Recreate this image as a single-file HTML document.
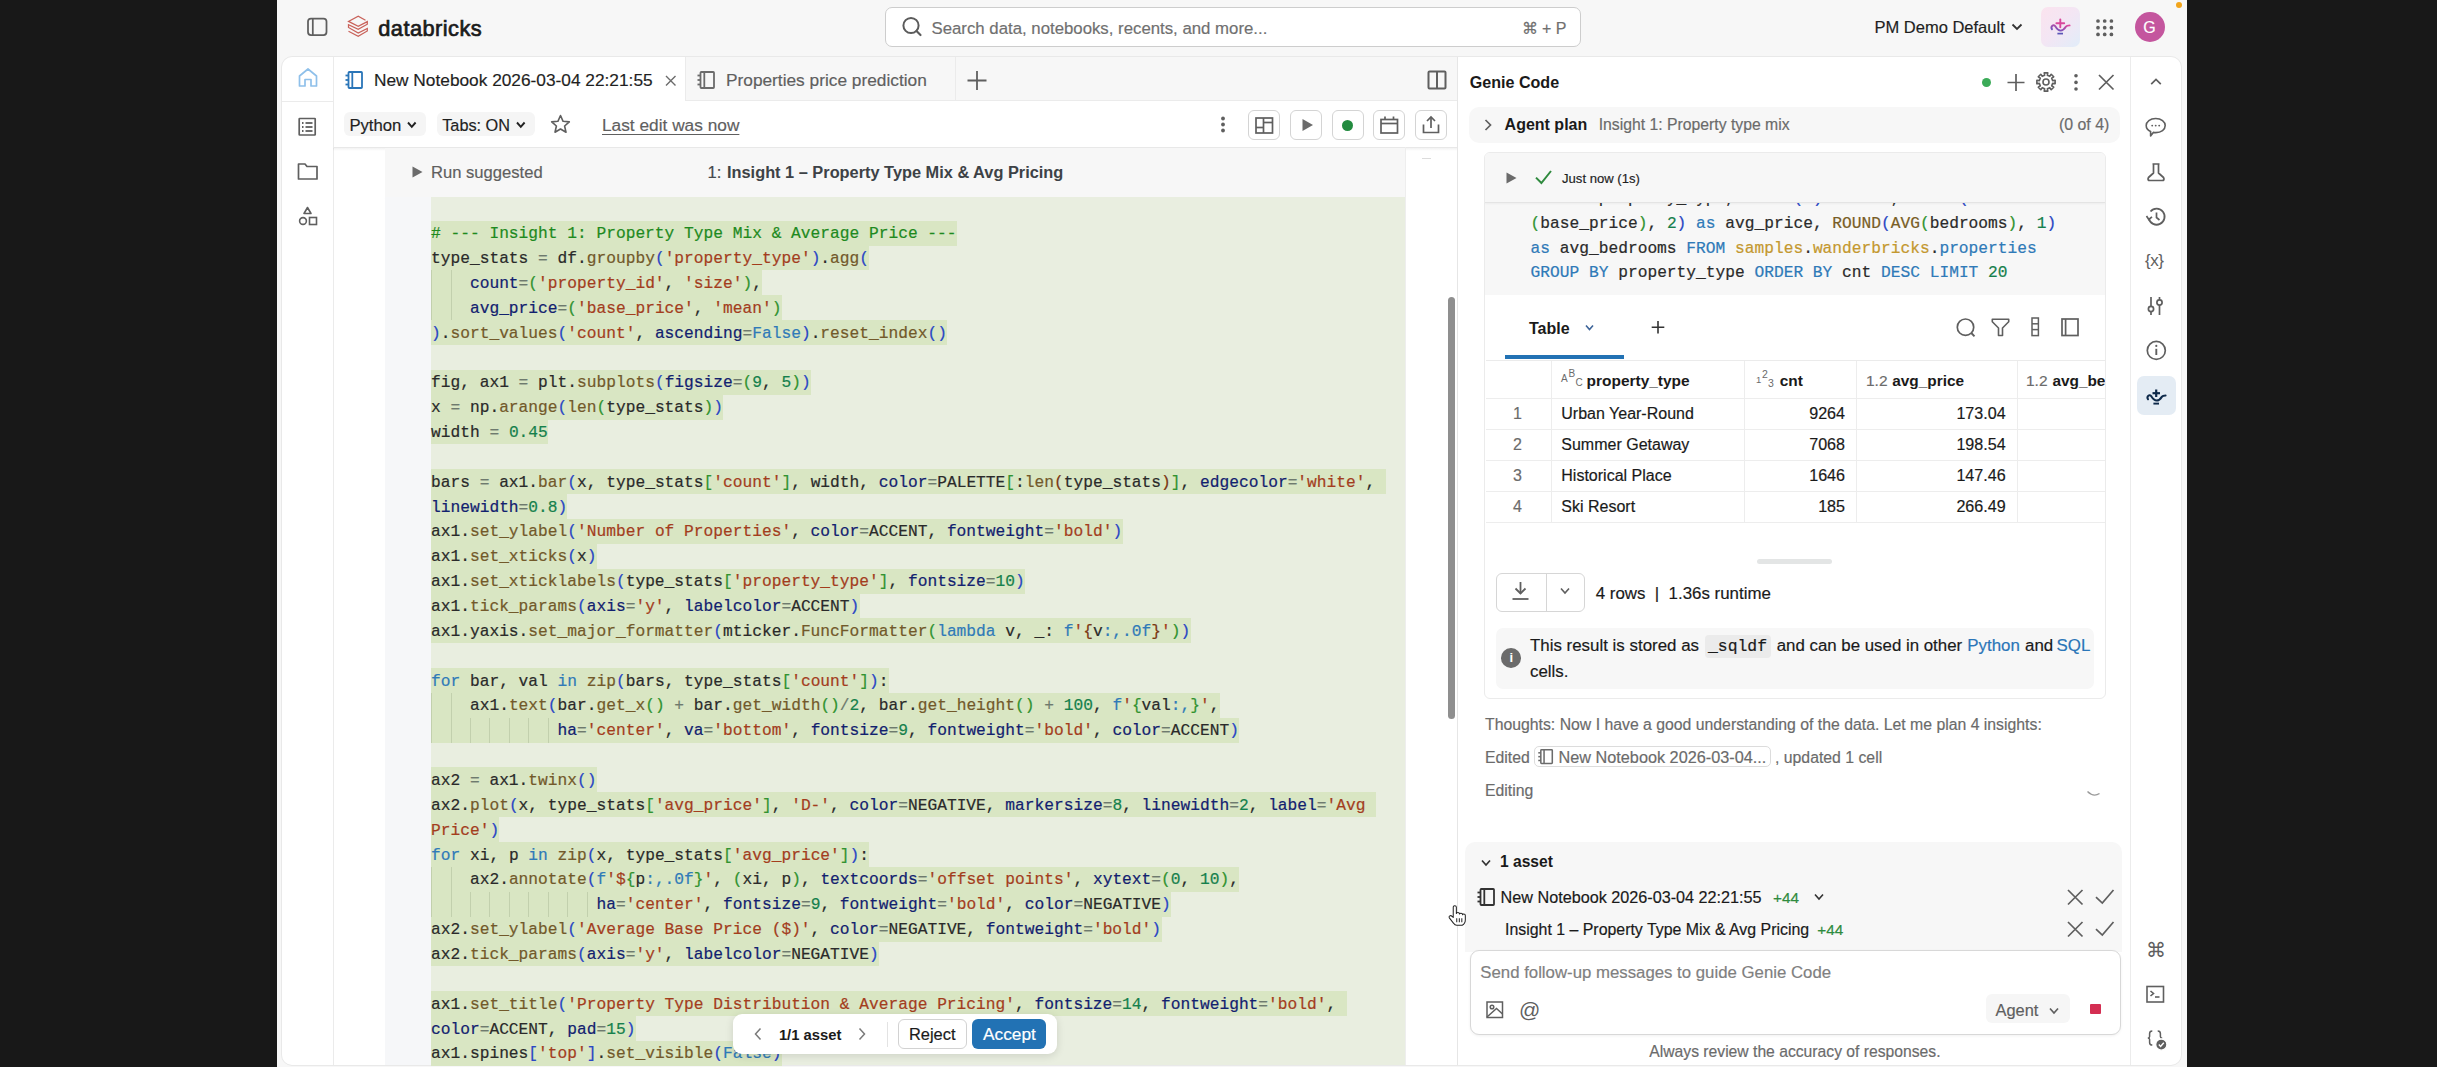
<!DOCTYPE html>
<html><head><meta charset="utf-8">
<style>
*{box-sizing:border-box}
html,body{margin:0;padding:0}
body{width:2437px;height:1067px;background:#181818;position:relative;overflow:hidden;font-family:"Liberation Sans",sans-serif;color:#1f1f1f}
.a{position:absolute}
.t{position:absolute;white-space:pre;line-height:1}
svg{position:absolute;overflow:visible}
.m{font-family:"Liberation Mono",monospace}
</style></head><body>
<div class="a" style="left:277px;top:0px;width:1910px;height:1067px;background:#f7f7f7"></div>
<div class="a" style="left:282px;top:57px;width:1176px;height:1008px;background:#fff;border-radius:10px 0 0 10px;box-shadow:-1px 0 0 0 #e9e9e9,0 -1px 0 0 #e9e9e9,0 1px 0 0 #e9e9e9"></div>
<div class="a" style="left:1458px;top:57px;width:723px;height:1008px;background:#fff;border-radius:0 10px 10px 0;box-shadow:1px 0 0 0 #e9e9e9,0 -1px 0 0 #e9e9e9,0 1px 0 0 #e9e9e9"></div>
<div class="a" style="left:1457px;top:57px;width:1px;height:1008px;background:#e6e6e6"></div>
<svg style="left:300px;top:10px;" width="40" height="40" viewBox="0 0 40 40"><rect x="8" y="8.5" width="18.5" height="16.5" rx="3" fill="none" stroke="#5f5f5f" stroke-width="1.75"/><line x1="12.8" y1="8.5" x2="12.8" y2="25" stroke="#5f5f5f" stroke-width="1.75"/></svg>
<svg style="left:344px;top:12px;" width="30" height="28" viewBox="0 0 30 28"><path d="M21.5 8.3 L14.2 4.2 L4.5 9.4 L14.2 14.4 L23.3 9.6 L23.3 12.2 L14.2 17.3 L4.5 12.8 L4.5 15.5 L14.2 21 L23.3 16.4 L23.3 19 L14.2 24.4 L4.5 19.3" fill="none" stroke="#c9625a" stroke-width="1.25" stroke-linejoin="miter"/></svg>
<div id="tx1" class="t" style="left:378.30px;top:17.82px;font-size:21.8px;color:#1b1b1b;font-weight:400;letter-spacing:0.45px;-webkit-text-stroke:0.7px #1b1b1b">databricks<i style="display:inline-block;width:0;height:0"></i></div>
<div class="a" style="left:885px;top:7px;width:696px;height:40px;background:#fff;border:1.5px solid #cdcdcd;border-radius:7px"></div>
<svg style="left:895px;top:12px;" width="30" height="30" viewBox="0 0 30 30"><circle cx="16" cy="13.5" r="7.6" fill="none" stroke="#5b5b5b" stroke-width="2"/><line x1="21.5" y1="19" x2="25.5" y2="23" stroke="#5b5b5b" stroke-width="2.2" stroke-linecap="round"/></svg>
<div id="tx2" class="t" style="left:931.50px;top:21.01px;font-size:16.8px;color:#707070;font-weight:400;;-webkit-text-stroke:0.18px currentColor">Search data, notebooks, recents, and more...<i style="display:inline-block;width:0;height:0"></i></div>
<div id="tx3" class="t" style="left:1521.50px;top:20.50px;font-size:16px;color:#707070;font-weight:400;;-webkit-text-stroke:0.18px currentColor">⌘ + P<i style="display:inline-block;width:0;height:0"></i></div>
<div id="tx4" class="t" style="left:1874.50px;top:19.21px;font-size:16.5px;color:#1f1f1f;font-weight:400;;-webkit-text-stroke:0.18px currentColor">PM Demo Default<i style="display:inline-block;width:0;height:0"></i></div>
<svg style="left:2010px;top:22px;" width="14" height="10" viewBox="0 0 14 10"><path d="M2.5 2.5 L7 7 L11.5 2.5" fill="none" stroke="#333" stroke-width="1.8"/></svg>
<div class="a" style="left:2041px;top:7px;width:39px;height:40px;border-radius:7px;background:linear-gradient(135deg,#fbe3ee 0%,#f3e6f4 50%,#e1edf9 100%)"></div>
<svg style="left:2040px;top:6px;" width="42" height="42" viewBox="0 0 42 42"><defs><linearGradient id="lg1" x1="0" y1="1" x2="1" y2="0"><stop offset="0" stop-color="#5d55c0"/><stop offset="1" stop-color="#e2479a"/></linearGradient></defs><path d="M12 23.3 C10.2 20.3 13.6 17.6 15.3 20.3 C16.8 22.8 18.6 24.6 20.6 24.6 C23.2 24.6 25 22.2 26 20.6 C26.6 19.6 27.6 19.4 29.6 19.4" fill="none" stroke="url(#lg1)" stroke-width="1.9" stroke-linecap="round"/><line x1="20.3" y1="13.4" x2="20.3" y2="21.2" stroke="#d8479c" stroke-width="1.9" stroke-linecap="round"/><line x1="16.4" y1="17.3" x2="24.2" y2="17.3" stroke="#d8479c" stroke-width="1.9" stroke-linecap="round"/><line x1="17.4" y1="27.6" x2="23" y2="27.6" stroke="#5a55b8" stroke-width="1.7"/></svg>
<svg style="left:2096.3px;top:18.5px;" width="18" height="18" viewBox="0 0 18 18"><circle cx="2.0" cy="2.0" r="1.85" fill="#5f5f5f"/><circle cx="2.0" cy="8.7" r="1.85" fill="#5f5f5f"/><circle cx="2.0" cy="15.4" r="1.85" fill="#5f5f5f"/><circle cx="8.7" cy="2.0" r="1.85" fill="#5f5f5f"/><circle cx="8.7" cy="8.7" r="1.85" fill="#5f5f5f"/><circle cx="8.7" cy="15.4" r="1.85" fill="#5f5f5f"/><circle cx="15.4" cy="2.0" r="1.85" fill="#5f5f5f"/><circle cx="15.4" cy="8.7" r="1.85" fill="#5f5f5f"/><circle cx="15.4" cy="15.4" r="1.85" fill="#5f5f5f"/></svg>
<div class="a" style="left:2134.5px;top:12px;width:30px;height:30px;border-radius:50%;background:#c4569e"></div>
<div id="tx5" class="t" style="left:1649.50px;width:1000px;text-align:center;top:20.00px;font-size:16px;color:#fff;font-weight:400;;-webkit-text-stroke:0.18px currentColor">G<i style="display:inline-block;width:0;height:0"></i></div>
<div class="a" style="left:2176px;top:2px;width:6px;height:6px;border-radius:50%;background:#f2a51c"></div>
<div class="a" style="left:333px;top:57px;width:1px;height:1008px;background:#ebebeb"></div>
<div class="a" style="left:282px;top:101px;width:51px;height:1px;background:#ebebeb"></div>
<div class="a" style="left:685px;top:57px;width:772px;height:44px;background:#f7f7f7;border-bottom:1px solid #ebebeb;border-left:1px solid #ebebeb"></div>
<div class="a" style="left:955px;top:57px;width:1px;height:44px;background:#ebebeb"></div>
<svg style="left:297px;top:67px;" width="22" height="22" viewBox="0 0 22 22"><path d="M2.5 9 L11 2 L19.5 9 L19.5 19 L14 19 L14 12.5 L8 12.5 L8 19 L2.5 19 Z" fill="none" stroke="#8fc0ea" stroke-width="1.7" stroke-linejoin="round"/></svg>
<svg style="left:344px;top:71px;" width="20" height="20" viewBox="0 0 20 20"><g fill="none" stroke="#2a75b8" stroke-width="1.8"><rect x="4.5" y="1" width="13.5" height="16" rx="0.8"/><line x1="8.3" y1="1" x2="8.3" y2="17"/><line x1="1.5" y1="4.5" x2="4.5" y2="4.5"/><line x1="1.5" y1="9" x2="4.5" y2="9"/><line x1="1.5" y1="13.5" x2="4.5" y2="13.5"/></g></svg>
<div id="tx6" class="t" style="left:374.00px;top:71.90px;font-size:17.3px;color:#1f1f1f;font-weight:400;;-webkit-text-stroke:0.18px currentColor">New Notebook 2026-03-04 22:21:55<i style="display:inline-block;width:0;height:0"></i></div>
<svg style="left:665.5px;top:75.5px;" width="12" height="12" viewBox="0 0 12 12"><path d="M0 0 L9.5 9.5 M9.5 0 L0 9.5" stroke="#6b6b6b" stroke-width="1.4"/></svg>
<svg style="left:696px;top:71px;" width="20" height="20" viewBox="0 0 20 20"><g fill="none" stroke="#6b6b6b" stroke-width="1.8"><rect x="4.5" y="1" width="13.5" height="16" rx="0.8"/><line x1="8.3" y1="1" x2="8.3" y2="17"/><line x1="1.5" y1="4.5" x2="4.5" y2="4.5"/><line x1="1.5" y1="9" x2="4.5" y2="9"/><line x1="1.5" y1="13.5" x2="4.5" y2="13.5"/></g></svg>
<div id="tx7" class="t" style="left:726.00px;top:71.90px;font-size:17.3px;color:#5f5f5f;font-weight:400;;-webkit-text-stroke:0.18px currentColor">Properties price prediction<i style="display:inline-block;width:0;height:0"></i></div>
<svg style="left:966px;top:70px;" width="22" height="22" viewBox="0 0 22 22"><path d="M11 1 V20 M1.5 10.5 H20.5" stroke="#5f5f5f" stroke-width="1.8"/></svg>
<svg style="left:1427px;top:70px;" width="22" height="22" viewBox="0 0 22 22"><rect x="1.5" y="1.5" width="17" height="17" rx="1" fill="none" stroke="#5f5f5f" stroke-width="2"/><line x1="10" y1="1.5" x2="10" y2="18.5" stroke="#5f5f5f" stroke-width="2"/></svg>
<div class="a" style="left:344.2px;top:112.3px;width:82px;height:24.2px;background:#f5f5f5;border-radius:6px"></div>
<div id="tx8" class="t" style="left:349.40px;top:117.60px;font-size:16.7px;color:#1f1f1f;font-weight:400;;-webkit-text-stroke:0.18px currentColor">Python<i style="display:inline-block;width:0;height:0"></i></div>
<svg style="left:407.3px;top:121px;" width="12" height="10" viewBox="0 0 12 10"><path d="M1 1.5 L4.8 5.8 L8.6 1.5" fill="none" stroke="#222" stroke-width="1.9"/></svg>
<div class="a" style="left:436.6px;top:112.3px;width:98px;height:24.2px;background:#f5f5f5;border-radius:6px"></div>
<div id="tx9" class="t" style="left:442.20px;top:116.61px;font-size:16.3px;color:#1f1f1f;font-weight:400;;-webkit-text-stroke:0.18px currentColor">Tabs: ON<i style="display:inline-block;width:0;height:0"></i></div>
<svg style="left:516px;top:121px;" width="12" height="10" viewBox="0 0 12 10"><path d="M1 1.5 L4.8 5.8 L8.6 1.5" fill="none" stroke="#222" stroke-width="1.9"/></svg>
<svg style="left:550px;top:114px;" width="22" height="22" viewBox="0 0 22 22"><path d="M10.5 1.5 L13.1 7.3 L19.3 7.9 L14.6 12 L16 18.2 L10.5 15 L5 18.2 L6.4 12 L1.7 7.9 L7.9 7.3 Z" fill="none" stroke="#5f5f5f" stroke-width="1.6" stroke-linejoin="round"/></svg>
<div id="tx10" class="t" style="left:602.00px;top:117.01px;font-size:17.3px;color:#5f5f5f;font-weight:400;text-decoration:underline;text-underline-offset:3px;text-decoration-thickness:1px;-webkit-text-stroke:0.18px currentColor">Last edit was now<i style="display:inline-block;width:0;height:0"></i></div>
<svg style="left:1217px;top:115px;" width="12" height="20" viewBox="0 0 12 20"><circle cx="6" cy="3.5" r="1.9" fill="#5f5f5f"/><circle cx="6" cy="9.5" r="1.9" fill="#5f5f5f"/><circle cx="6" cy="15.5" r="1.9" fill="#5f5f5f"/></svg>
<div class="a" style="left:1248px;top:110px;width:32px;height:30px;border:1.3px solid #d4d4d4;border-radius:6px;background:#fff"></div>
<div class="a" style="left:1290px;top:110px;width:32px;height:30px;border:1.3px solid #d4d4d4;border-radius:6px;background:#fff"></div>
<div class="a" style="left:1331.5px;top:110px;width:32px;height:30px;border:1.3px solid #d4d4d4;border-radius:6px;background:#fff"></div>
<div class="a" style="left:1373px;top:110px;width:32px;height:30px;border:1.3px solid #d4d4d4;border-radius:6px;background:#fff"></div>
<div class="a" style="left:1415px;top:110px;width:32px;height:30px;border:1.3px solid #d4d4d4;border-radius:6px;background:#fff"></div>
<svg style="left:1255px;top:117px;" width="18" height="16" viewBox="0 0 18 16"><g fill="none" stroke="#5f5f5f" stroke-width="1.7"><rect x="1" y="1" width="16.5" height="15"/><line x1="8.5" y1="1" x2="8.5" y2="16"/><line x1="1" y1="10.5" x2="8.5" y2="10.5"/><line x1="8.5" y1="5.5" x2="17.5" y2="5.5"/></g></svg>
<svg style="left:1301px;top:118px;" width="14" height="14" viewBox="0 0 14 14"><path d="M1.5 1 L12 7 L1.5 13 Z" fill="#6b6b6b"/></svg>
<div class="a" style="left:1341.5px;top:119.5px;width:11px;height:11px;border-radius:50%;background:#228b3f"></div>
<svg style="left:1379.5px;top:116px;" width="18" height="18" viewBox="0 0 18 18"><g fill="none" stroke="#5f5f5f" stroke-width="1.7"><rect x="1" y="3.5" width="16.5" height="13.5"/><line x1="1" y1="7.5" x2="17.5" y2="7.5"/><line x1="5" y1="0.5" x2="5" y2="3.5"/><line x1="13.5" y1="0.5" x2="13.5" y2="3.5"/></g></svg>
<svg style="left:1421.5px;top:116px;" width="18" height="18" viewBox="0 0 18 18"><g fill="none" stroke="#5f5f5f" stroke-width="1.7"><path d="M1.5 8.5 V16.5 H16.5 V8.5"/><line x1="9" y1="1" x2="9" y2="12"/><path d="M5 5 L9 1 L13 5"/></g></svg>
<div class="a" style="left:333px;top:147px;width:1124px;height:1px;background:#e8e8e8"></div>
<div class="a" style="left:333px;top:148px;width:1124px;height:3px;background:linear-gradient(rgba(0,0,0,0.05),rgba(0,0,0,0))"></div>
<svg style="left:298px;top:117px;" width="20" height="20" viewBox="0 0 20 20"><g fill="none" stroke="#5f5f5f" stroke-width="1.7"><rect x="1.2" y="1.5" width="16" height="16.5" rx="0.5"/></g><g stroke="#5f5f5f" stroke-width="1.8"><line x1="4" y1="6" x2="5.5" y2="6"/><line x1="7.5" y1="6" x2="14.5" y2="6"/><line x1="4" y1="10" x2="5.5" y2="10"/><line x1="7.5" y1="10" x2="14.5" y2="10"/><line x1="4" y1="14" x2="5.5" y2="14"/><line x1="7.5" y1="14" x2="14.5" y2="14"/></g></svg>
<svg style="left:297px;top:162px;" width="22" height="20" viewBox="0 0 22 20"><path d="M1.5 2 H8 L10 4.5 H20 V17 H1.5 Z" fill="none" stroke="#5f5f5f" stroke-width="1.7" stroke-linejoin="round"/></svg>
<svg style="left:298px;top:206px;" width="22" height="22" viewBox="0 0 22 22"><g fill="none" stroke="#5f5f5f" stroke-width="1.6"><path d="M9.5 1.5 L13 7.5 H6 Z" stroke-linejoin="round"/><circle cx="5" cy="15" r="3.4"/><rect x="11.5" y="11.5" width="7" height="7"/></g></svg>
<div class="a" style="left:385px;top:148px;width:1020px;height:49px;background:#f7f7f7"></div>
<div class="a" style="left:385px;top:196.5px;width:1020px;height:1px;background:#e6e6e6;box-shadow:0 1px 2px rgba(0,0,0,0.05)"></div>
<svg style="left:412px;top:166px;" width="12" height="12" viewBox="0 0 12 12"><path d="M0.5 0.5 L10.5 6 L0.5 11.5 Z" fill="#6b6b6b"/></svg>
<div id="tx11" class="t" style="left:431.00px;top:165.01px;font-size:16.6px;color:#5f5f5f;font-weight:400;;-webkit-text-stroke:0.18px currentColor">Run suggested<i style="display:inline-block;width:0;height:0"></i></div>
<div id="tx12" class="t" style="left:707.50px;top:165.01px;font-size:16.6px;color:#45494d;font-weight:400;;-webkit-text-stroke:0.18px currentColor">1:<i style="display:inline-block;width:0;height:0"></i></div>
<div id="tx13" class="t" style="left:727.00px;top:164.00px;font-size:16.35px;color:#3d4246;font-weight:700;">Insight 1 – Property Type Mix &amp; Avg Pricing<i style="display:inline-block;width:0;height:0"></i></div>
<div class="a" style="left:385px;top:197px;width:46px;height:868px;background:#f6f7f9"></div>
<div class="a" style="left:1421.5px;top:157.5px;width:9px;height:1.5px;background:#dcdcdc"></div>
<div class="a" style="left:1448px;top:297px;width:6.5px;height:422px;background:#8f8f8f;border-radius:4px"></div>
<div class="a" style="left:1405px;top:147px;width:1px;height:918px;background:#eeeeee"></div>
<div class="a" style="left:431px;top:197px;width:974px;height:868px;background:#e9eee0"></div>
<div class="a" style="left:431px;top:220.50px;width:525.96px;height:25.06px;background:#d9e6c3"></div>
<div class="a" style="left:431px;top:245.36px;width:438.30px;height:25.06px;background:#d9e6c3"></div>
<div class="a" style="left:431px;top:270.22px;width:331.16px;height:25.06px;background:#d9e6c3"></div>
<div class="a" style="left:431px;top:295.08px;width:350.64px;height:25.06px;background:#d9e6c3"></div>
<div class="a" style="left:431px;top:319.94px;width:516.22px;height:25.06px;background:#d9e6c3"></div>
<div class="a" style="left:431px;top:369.66px;width:379.86px;height:25.06px;background:#d9e6c3"></div>
<div class="a" style="left:431px;top:394.52px;width:292.20px;height:25.06px;background:#d9e6c3"></div>
<div class="a" style="left:431px;top:419.38px;width:116.88px;height:25.06px;background:#d9e6c3"></div>
<div class="a" style="left:431px;top:469.10px;width:954.52px;height:25.06px;background:#d9e6c3"></div>
<div class="a" style="left:431px;top:493.96px;width:136.36px;height:25.06px;background:#d9e6c3"></div>
<div class="a" style="left:431px;top:518.82px;width:691.54px;height:25.06px;background:#d9e6c3"></div>
<div class="a" style="left:431px;top:543.68px;width:165.58px;height:25.06px;background:#d9e6c3"></div>
<div class="a" style="left:431px;top:568.54px;width:594.14px;height:25.06px;background:#d9e6c3"></div>
<div class="a" style="left:431px;top:593.40px;width:428.56px;height:25.06px;background:#d9e6c3"></div>
<div class="a" style="left:431px;top:618.26px;width:759.72px;height:25.06px;background:#d9e6c3"></div>
<div class="a" style="left:431px;top:667.98px;width:457.78px;height:25.06px;background:#d9e6c3"></div>
<div class="a" style="left:431px;top:692.84px;width:788.94px;height:25.06px;background:#d9e6c3"></div>
<div class="a" style="left:431px;top:717.70px;width:808.42px;height:25.06px;background:#d9e6c3"></div>
<div class="a" style="left:431px;top:767.42px;width:165.58px;height:25.06px;background:#d9e6c3"></div>
<div class="a" style="left:431px;top:792.28px;width:944.78px;height:25.06px;background:#d9e6c3"></div>
<div class="a" style="left:431px;top:817.14px;width:68.18px;height:25.06px;background:#d9e6c3"></div>
<div class="a" style="left:431px;top:842.00px;width:438.30px;height:25.06px;background:#d9e6c3"></div>
<div class="a" style="left:431px;top:866.86px;width:808.42px;height:25.06px;background:#d9e6c3"></div>
<div class="a" style="left:431px;top:891.72px;width:740.24px;height:25.06px;background:#d9e6c3"></div>
<div class="a" style="left:431px;top:916.58px;width:730.50px;height:25.06px;background:#d9e6c3"></div>
<div class="a" style="left:431px;top:941.44px;width:448.04px;height:25.06px;background:#d9e6c3"></div>
<div class="a" style="left:431px;top:991.16px;width:915.56px;height:25.06px;background:#d9e6c3"></div>
<div class="a" style="left:431px;top:1016.02px;width:204.54px;height:25.06px;background:#d9e6c3"></div>
<div class="a" style="left:431px;top:1040.88px;width:350.64px;height:25.06px;background:#d9e6c3"></div>
<div class="a" style="left:431.0px;top:270.2px;width:1px;height:25.2px;background:rgba(90,110,80,0.18)"></div>
<div class="a" style="left:450.5px;top:270.2px;width:1px;height:25.2px;background:rgba(90,110,80,0.18)"></div>
<div class="a" style="left:431.0px;top:295.1px;width:1px;height:25.2px;background:rgba(90,110,80,0.18)"></div>
<div class="a" style="left:450.5px;top:295.1px;width:1px;height:25.2px;background:rgba(90,110,80,0.18)"></div>
<div class="a" style="left:431.0px;top:692.8px;width:1px;height:25.2px;background:rgba(90,110,80,0.18)"></div>
<div class="a" style="left:450.5px;top:692.8px;width:1px;height:25.2px;background:rgba(90,110,80,0.18)"></div>
<div class="a" style="left:431.0px;top:717.7px;width:1px;height:25.2px;background:rgba(90,110,80,0.18)"></div>
<div class="a" style="left:450.5px;top:717.7px;width:1px;height:25.2px;background:rgba(90,110,80,0.18)"></div>
<div class="a" style="left:470.0px;top:717.7px;width:1px;height:25.2px;background:rgba(90,110,80,0.18)"></div>
<div class="a" style="left:489.4px;top:717.7px;width:1px;height:25.2px;background:rgba(90,110,80,0.18)"></div>
<div class="a" style="left:508.9px;top:717.7px;width:1px;height:25.2px;background:rgba(90,110,80,0.18)"></div>
<div class="a" style="left:528.4px;top:717.7px;width:1px;height:25.2px;background:rgba(90,110,80,0.18)"></div>
<div class="a" style="left:547.9px;top:717.7px;width:1px;height:25.2px;background:rgba(90,110,80,0.18)"></div>
<div class="a" style="left:431.0px;top:866.9px;width:1px;height:25.2px;background:rgba(90,110,80,0.18)"></div>
<div class="a" style="left:450.5px;top:866.9px;width:1px;height:25.2px;background:rgba(90,110,80,0.18)"></div>
<div class="a" style="left:431.0px;top:891.7px;width:1px;height:25.2px;background:rgba(90,110,80,0.18)"></div>
<div class="a" style="left:450.5px;top:891.7px;width:1px;height:25.2px;background:rgba(90,110,80,0.18)"></div>
<div class="a" style="left:470.0px;top:891.7px;width:1px;height:25.2px;background:rgba(90,110,80,0.18)"></div>
<div class="a" style="left:489.4px;top:891.7px;width:1px;height:25.2px;background:rgba(90,110,80,0.18)"></div>
<div class="a" style="left:508.9px;top:891.7px;width:1px;height:25.2px;background:rgba(90,110,80,0.18)"></div>
<div class="a" style="left:528.4px;top:891.7px;width:1px;height:25.2px;background:rgba(90,110,80,0.18)"></div>
<div class="a" style="left:547.9px;top:891.7px;width:1px;height:25.2px;background:rgba(90,110,80,0.18)"></div>
<div class="a" style="left:567.4px;top:891.7px;width:1px;height:25.2px;background:rgba(90,110,80,0.18)"></div>
<div class="a" style="left:586.8px;top:891.7px;width:1px;height:25.2px;background:rgba(90,110,80,0.18)"></div>
<div id="tx14" class="t m" style="left:431.00px;top:222.10px;font-size:16.23px;line-height:24.86px;-webkit-text-stroke:0.2px currentColor"><span style="color:#1e8a1e"># --- Insight 1: Property Type Mix &amp; Average Price ---</span><i style="display:inline-block;width:0;height:0"></i></div>
<div id="tx15" class="t m" style="left:431.00px;top:246.96px;font-size:16.23px;line-height:24.86px;-webkit-text-stroke:0.2px currentColor"><span style="color:#2a2a2a">type_stats</span><span style="color:#2a2a2a"> </span><span style="color:#6e7a6e">=</span><span style="color:#2a2a2a"> </span><span style="color:#2a2a2a">df</span><span style="color:#2a2a2a">.</span><span style="color:#72592a">groupby</span><span style="color:#2a47c4">(</span><span style="color:#a33d1d">'property_type'</span><span style="color:#2a47c4">)</span><span style="color:#2a2a2a">.</span><span style="color:#72592a">agg</span><span style="color:#2a47c4">(</span><i style="display:inline-block;width:0;height:0"></i></div>
<div id="tx16" class="t m" style="left:431.00px;top:271.83px;font-size:16.23px;line-height:24.86px;-webkit-text-stroke:0.2px currentColor"><span style="color:#2a2a2a"> </span><span style="color:#2a2a2a"> </span><span style="color:#2a2a2a"> </span><span style="color:#2a2a2a"> </span><span style="color:#12216f">count</span><span style="color:#6e7a6e">=</span><span style="color:#319331">(</span><span style="color:#a33d1d">'property_id'</span><span style="color:#2a2a2a">,</span><span style="color:#2a2a2a"> </span><span style="color:#a33d1d">'size'</span><span style="color:#319331">)</span><span style="color:#2a2a2a">,</span><i style="display:inline-block;width:0;height:0"></i></div>
<div id="tx17" class="t m" style="left:431.00px;top:296.69px;font-size:16.23px;line-height:24.86px;-webkit-text-stroke:0.2px currentColor"><span style="color:#2a2a2a"> </span><span style="color:#2a2a2a"> </span><span style="color:#2a2a2a"> </span><span style="color:#2a2a2a"> </span><span style="color:#12216f">avg_price</span><span style="color:#6e7a6e">=</span><span style="color:#319331">(</span><span style="color:#a33d1d">'base_price'</span><span style="color:#2a2a2a">,</span><span style="color:#2a2a2a"> </span><span style="color:#a33d1d">'mean'</span><span style="color:#319331">)</span><i style="display:inline-block;width:0;height:0"></i></div>
<div id="tx18" class="t m" style="left:431.00px;top:321.54px;font-size:16.23px;line-height:24.86px;-webkit-text-stroke:0.2px currentColor"><span style="color:#2a47c4">)</span><span style="color:#2a2a2a">.</span><span style="color:#72592a">sort_values</span><span style="color:#2a47c4">(</span><span style="color:#a33d1d">'count'</span><span style="color:#2a2a2a">,</span><span style="color:#2a2a2a"> </span><span style="color:#12216f">ascending</span><span style="color:#6e7a6e">=</span><span style="color:#2f7ab8">False</span><span style="color:#2a47c4">)</span><span style="color:#2a2a2a">.</span><span style="color:#72592a">reset_index</span><span style="color:#2a47c4">(</span><span style="color:#2a47c4">)</span><i style="display:inline-block;width:0;height:0"></i></div>
<div id="tx19" class="t m" style="left:431.00px;top:346.40px;font-size:16.23px;line-height:24.86px;-webkit-text-stroke:0.2px currentColor"><i style="display:inline-block;width:0;height:0"></i></div>
<div id="tx20" class="t m" style="left:431.00px;top:371.27px;font-size:16.23px;line-height:24.86px;-webkit-text-stroke:0.2px currentColor"><span style="color:#2a2a2a">fig</span><span style="color:#2a2a2a">,</span><span style="color:#2a2a2a"> </span><span style="color:#2a2a2a">ax1</span><span style="color:#2a2a2a"> </span><span style="color:#6e7a6e">=</span><span style="color:#2a2a2a"> </span><span style="color:#2a2a2a">plt</span><span style="color:#2a2a2a">.</span><span style="color:#72592a">subplots</span><span style="color:#2a47c4">(</span><span style="color:#12216f">figsize</span><span style="color:#6e7a6e">=</span><span style="color:#319331">(</span><span style="color:#15804c">9</span><span style="color:#2a2a2a">,</span><span style="color:#2a2a2a"> </span><span style="color:#15804c">5</span><span style="color:#319331">)</span><span style="color:#2a47c4">)</span><i style="display:inline-block;width:0;height:0"></i></div>
<div id="tx21" class="t m" style="left:431.00px;top:396.13px;font-size:16.23px;line-height:24.86px;-webkit-text-stroke:0.2px currentColor"><span style="color:#2a2a2a">x</span><span style="color:#2a2a2a"> </span><span style="color:#6e7a6e">=</span><span style="color:#2a2a2a"> </span><span style="color:#2a2a2a">np</span><span style="color:#2a2a2a">.</span><span style="color:#72592a">arange</span><span style="color:#2a47c4">(</span><span style="color:#72592a">len</span><span style="color:#319331">(</span><span style="color:#2a2a2a">type_stats</span><span style="color:#319331">)</span><span style="color:#2a47c4">)</span><i style="display:inline-block;width:0;height:0"></i></div>
<div id="tx22" class="t m" style="left:431.00px;top:420.98px;font-size:16.23px;line-height:24.86px;-webkit-text-stroke:0.2px currentColor"><span style="color:#2a2a2a">width</span><span style="color:#2a2a2a"> </span><span style="color:#6e7a6e">=</span><span style="color:#2a2a2a"> </span><span style="color:#15804c">0.45</span><i style="display:inline-block;width:0;height:0"></i></div>
<div id="tx23" class="t m" style="left:431.00px;top:445.85px;font-size:16.23px;line-height:24.86px;-webkit-text-stroke:0.2px currentColor"><i style="display:inline-block;width:0;height:0"></i></div>
<div id="tx24" class="t m" style="left:431.00px;top:470.71px;font-size:16.23px;line-height:24.86px;-webkit-text-stroke:0.2px currentColor"><span style="color:#2a2a2a">bars</span><span style="color:#2a2a2a"> </span><span style="color:#6e7a6e">=</span><span style="color:#2a2a2a"> </span><span style="color:#2a2a2a">ax1</span><span style="color:#2a2a2a">.</span><span style="color:#72592a">bar</span><span style="color:#2a47c4">(</span><span style="color:#2a2a2a">x</span><span style="color:#2a2a2a">,</span><span style="color:#2a2a2a"> </span><span style="color:#2a2a2a">type_stats</span><span style="color:#319331">[</span><span style="color:#a33d1d">'count'</span><span style="color:#319331">]</span><span style="color:#2a2a2a">,</span><span style="color:#2a2a2a"> </span><span style="color:#2a2a2a">width</span><span style="color:#2a2a2a">,</span><span style="color:#2a2a2a"> </span><span style="color:#12216f">color</span><span style="color:#6e7a6e">=</span><span style="color:#2a2a2a">PALETTE</span><span style="color:#319331">[</span><span style="color:#2a2a2a">:</span><span style="color:#72592a">len</span><span style="color:#7b3814">(</span><span style="color:#2a2a2a">type_stats</span><span style="color:#7b3814">)</span><span style="color:#319331">]</span><span style="color:#2a2a2a">,</span><span style="color:#2a2a2a"> </span><span style="color:#12216f">edgecolor</span><span style="color:#6e7a6e">=</span><span style="color:#a33d1d">'white'</span><span style="color:#2a2a2a">,</span><span style="color:#2a2a2a"> </span><i style="display:inline-block;width:0;height:0"></i></div>
<div id="tx25" class="t m" style="left:431.00px;top:495.56px;font-size:16.23px;line-height:24.86px;-webkit-text-stroke:0.2px currentColor"><span style="color:#12216f">linewidth</span><span style="color:#6e7a6e">=</span><span style="color:#15804c">0.8</span><span style="color:#2a47c4">)</span><i style="display:inline-block;width:0;height:0"></i></div>
<div id="tx26" class="t m" style="left:431.00px;top:520.42px;font-size:16.23px;line-height:24.86px;-webkit-text-stroke:0.2px currentColor"><span style="color:#2a2a2a">ax1</span><span style="color:#2a2a2a">.</span><span style="color:#72592a">set_ylabel</span><span style="color:#2a47c4">(</span><span style="color:#a33d1d">'Number of Properties'</span><span style="color:#2a2a2a">,</span><span style="color:#2a2a2a"> </span><span style="color:#12216f">color</span><span style="color:#6e7a6e">=</span><span style="color:#2a2a2a">ACCENT</span><span style="color:#2a2a2a">,</span><span style="color:#2a2a2a"> </span><span style="color:#12216f">fontweight</span><span style="color:#6e7a6e">=</span><span style="color:#a33d1d">'bold'</span><span style="color:#2a47c4">)</span><i style="display:inline-block;width:0;height:0"></i></div>
<div id="tx27" class="t m" style="left:431.00px;top:545.29px;font-size:16.23px;line-height:24.86px;-webkit-text-stroke:0.2px currentColor"><span style="color:#2a2a2a">ax1</span><span style="color:#2a2a2a">.</span><span style="color:#72592a">set_xticks</span><span style="color:#2a47c4">(</span><span style="color:#2a2a2a">x</span><span style="color:#2a47c4">)</span><i style="display:inline-block;width:0;height:0"></i></div>
<div id="tx28" class="t m" style="left:431.00px;top:570.15px;font-size:16.23px;line-height:24.86px;-webkit-text-stroke:0.2px currentColor"><span style="color:#2a2a2a">ax1</span><span style="color:#2a2a2a">.</span><span style="color:#72592a">set_xticklabels</span><span style="color:#2a47c4">(</span><span style="color:#2a2a2a">type_stats</span><span style="color:#319331">[</span><span style="color:#a33d1d">'property_type'</span><span style="color:#319331">]</span><span style="color:#2a2a2a">,</span><span style="color:#2a2a2a"> </span><span style="color:#12216f">fontsize</span><span style="color:#6e7a6e">=</span><span style="color:#15804c">10</span><span style="color:#2a47c4">)</span><i style="display:inline-block;width:0;height:0"></i></div>
<div id="tx29" class="t m" style="left:431.00px;top:595.00px;font-size:16.23px;line-height:24.86px;-webkit-text-stroke:0.2px currentColor"><span style="color:#2a2a2a">ax1</span><span style="color:#2a2a2a">.</span><span style="color:#72592a">tick_params</span><span style="color:#2a47c4">(</span><span style="color:#12216f">axis</span><span style="color:#6e7a6e">=</span><span style="color:#a33d1d">'y'</span><span style="color:#2a2a2a">,</span><span style="color:#2a2a2a"> </span><span style="color:#12216f">labelcolor</span><span style="color:#6e7a6e">=</span><span style="color:#2a2a2a">ACCENT</span><span style="color:#2a47c4">)</span><i style="display:inline-block;width:0;height:0"></i></div>
<div id="tx30" class="t m" style="left:431.00px;top:619.87px;font-size:16.23px;line-height:24.86px;-webkit-text-stroke:0.2px currentColor"><span style="color:#2a2a2a">ax1</span><span style="color:#2a2a2a">.</span><span style="color:#2a2a2a">yaxis</span><span style="color:#2a2a2a">.</span><span style="color:#72592a">set_major_formatter</span><span style="color:#2a47c4">(</span><span style="color:#2a2a2a">mticker</span><span style="color:#2a2a2a">.</span><span style="color:#72592a">FuncFormatter</span><span style="color:#319331">(</span><span style="color:#2f7ab8">lambda</span><span style="color:#2a2a2a"> </span><span style="color:#2a2a2a">v</span><span style="color:#2a2a2a">,</span><span style="color:#2a2a2a"> </span><span style="color:#2a2a2a">_</span><span style="color:#2a2a2a">:</span><span style="color:#2a2a2a"> </span><span style="color:#2f7ab8">f</span><span style="color:#a33d1d">'</span><span style="color:#7b3814">{</span><span style="color:#2a2a2a">v</span><span style="color:#2f7ab8">:,.0f</span><span style="color:#7b3814">}</span><span style="color:#a33d1d">'</span><span style="color:#319331">)</span><span style="color:#2a47c4">)</span><i style="display:inline-block;width:0;height:0"></i></div>
<div id="tx31" class="t m" style="left:431.00px;top:644.73px;font-size:16.23px;line-height:24.86px;-webkit-text-stroke:0.2px currentColor"><i style="display:inline-block;width:0;height:0"></i></div>
<div id="tx32" class="t m" style="left:431.00px;top:669.59px;font-size:16.23px;line-height:24.86px;-webkit-text-stroke:0.2px currentColor"><span style="color:#2f7ab8">for</span><span style="color:#2a2a2a"> </span><span style="color:#2a2a2a">bar</span><span style="color:#2a2a2a">,</span><span style="color:#2a2a2a"> </span><span style="color:#2a2a2a">val</span><span style="color:#2a2a2a"> </span><span style="color:#2f7ab8">in</span><span style="color:#2a2a2a"> </span><span style="color:#72592a">zip</span><span style="color:#2a47c4">(</span><span style="color:#2a2a2a">bars</span><span style="color:#2a2a2a">,</span><span style="color:#2a2a2a"> </span><span style="color:#2a2a2a">type_stats</span><span style="color:#319331">[</span><span style="color:#a33d1d">'count'</span><span style="color:#319331">]</span><span style="color:#2a47c4">)</span><span style="color:#2a2a2a">:</span><i style="display:inline-block;width:0;height:0"></i></div>
<div id="tx33" class="t m" style="left:431.00px;top:694.44px;font-size:16.23px;line-height:24.86px;-webkit-text-stroke:0.2px currentColor"><span style="color:#2a2a2a"> </span><span style="color:#2a2a2a"> </span><span style="color:#2a2a2a"> </span><span style="color:#2a2a2a"> </span><span style="color:#2a2a2a">ax1</span><span style="color:#2a2a2a">.</span><span style="color:#72592a">text</span><span style="color:#2a47c4">(</span><span style="color:#2a2a2a">bar</span><span style="color:#2a2a2a">.</span><span style="color:#72592a">get_x</span><span style="color:#319331">(</span><span style="color:#319331">)</span><span style="color:#2a2a2a"> </span><span style="color:#6e7a6e">+</span><span style="color:#2a2a2a"> </span><span style="color:#2a2a2a">bar</span><span style="color:#2a2a2a">.</span><span style="color:#72592a">get_width</span><span style="color:#319331">(</span><span style="color:#319331">)</span><span style="color:#6e7a6e">/</span><span style="color:#15804c">2</span><span style="color:#2a2a2a">,</span><span style="color:#2a2a2a"> </span><span style="color:#2a2a2a">bar</span><span style="color:#2a2a2a">.</span><span style="color:#72592a">get_height</span><span style="color:#319331">(</span><span style="color:#319331">)</span><span style="color:#2a2a2a"> </span><span style="color:#6e7a6e">+</span><span style="color:#2a2a2a"> </span><span style="color:#15804c">100</span><span style="color:#2a2a2a">,</span><span style="color:#2a2a2a"> </span><span style="color:#2f7ab8">f</span><span style="color:#a33d1d">'</span><span style="color:#319331">{</span><span style="color:#2a2a2a">val</span><span style="color:#2f7ab8">:,</span><span style="color:#319331">}</span><span style="color:#a33d1d">'</span><span style="color:#2a2a2a">,</span><i style="display:inline-block;width:0;height:0"></i></div>
<div id="tx34" class="t m" style="left:431.00px;top:719.31px;font-size:16.23px;line-height:24.86px;-webkit-text-stroke:0.2px currentColor"><span style="color:#2a2a2a"> </span><span style="color:#2a2a2a"> </span><span style="color:#2a2a2a"> </span><span style="color:#2a2a2a"> </span><span style="color:#2a2a2a"> </span><span style="color:#2a2a2a"> </span><span style="color:#2a2a2a"> </span><span style="color:#2a2a2a"> </span><span style="color:#2a2a2a"> </span><span style="color:#2a2a2a"> </span><span style="color:#2a2a2a"> </span><span style="color:#2a2a2a"> </span><span style="color:#2a2a2a"> </span><span style="color:#12216f">ha</span><span style="color:#6e7a6e">=</span><span style="color:#a33d1d">'center'</span><span style="color:#2a2a2a">,</span><span style="color:#2a2a2a"> </span><span style="color:#12216f">va</span><span style="color:#6e7a6e">=</span><span style="color:#a33d1d">'bottom'</span><span style="color:#2a2a2a">,</span><span style="color:#2a2a2a"> </span><span style="color:#12216f">fontsize</span><span style="color:#6e7a6e">=</span><span style="color:#15804c">9</span><span style="color:#2a2a2a">,</span><span style="color:#2a2a2a"> </span><span style="color:#12216f">fontweight</span><span style="color:#6e7a6e">=</span><span style="color:#a33d1d">'bold'</span><span style="color:#2a2a2a">,</span><span style="color:#2a2a2a"> </span><span style="color:#12216f">color</span><span style="color:#6e7a6e">=</span><span style="color:#2a2a2a">ACCENT</span><span style="color:#2a47c4">)</span><i style="display:inline-block;width:0;height:0"></i></div>
<div id="tx35" class="t m" style="left:431.00px;top:744.17px;font-size:16.23px;line-height:24.86px;-webkit-text-stroke:0.2px currentColor"><i style="display:inline-block;width:0;height:0"></i></div>
<div id="tx36" class="t m" style="left:431.00px;top:769.04px;font-size:16.23px;line-height:24.86px;-webkit-text-stroke:0.2px currentColor"><span style="color:#2a2a2a">ax2</span><span style="color:#2a2a2a"> </span><span style="color:#6e7a6e">=</span><span style="color:#2a2a2a"> </span><span style="color:#2a2a2a">ax1</span><span style="color:#2a2a2a">.</span><span style="color:#72592a">twinx</span><span style="color:#2a47c4">(</span><span style="color:#2a47c4">)</span><i style="display:inline-block;width:0;height:0"></i></div>
<div id="tx37" class="t m" style="left:431.00px;top:793.88px;font-size:16.23px;line-height:24.86px;-webkit-text-stroke:0.2px currentColor"><span style="color:#2a2a2a">ax2</span><span style="color:#2a2a2a">.</span><span style="color:#72592a">plot</span><span style="color:#2a47c4">(</span><span style="color:#2a2a2a">x</span><span style="color:#2a2a2a">,</span><span style="color:#2a2a2a"> </span><span style="color:#2a2a2a">type_stats</span><span style="color:#319331">[</span><span style="color:#a33d1d">'avg_price'</span><span style="color:#319331">]</span><span style="color:#2a2a2a">,</span><span style="color:#2a2a2a"> </span><span style="color:#a33d1d">'D-'</span><span style="color:#2a2a2a">,</span><span style="color:#2a2a2a"> </span><span style="color:#12216f">color</span><span style="color:#6e7a6e">=</span><span style="color:#2a2a2a">NEGATIVE</span><span style="color:#2a2a2a">,</span><span style="color:#2a2a2a"> </span><span style="color:#12216f">markersize</span><span style="color:#6e7a6e">=</span><span style="color:#15804c">8</span><span style="color:#2a2a2a">,</span><span style="color:#2a2a2a"> </span><span style="color:#12216f">linewidth</span><span style="color:#6e7a6e">=</span><span style="color:#15804c">2</span><span style="color:#2a2a2a">,</span><span style="color:#2a2a2a"> </span><span style="color:#12216f">label</span><span style="color:#6e7a6e">=</span><span style="color:#a33d1d">'Avg </span><i style="display:inline-block;width:0;height:0"></i></div>
<div id="tx38" class="t m" style="left:431.00px;top:818.75px;font-size:16.23px;line-height:24.86px;-webkit-text-stroke:0.2px currentColor"><span style="color:#a33d1d">Price'</span><span style="color:#2a47c4">)</span><i style="display:inline-block;width:0;height:0"></i></div>
<div id="tx39" class="t m" style="left:431.00px;top:843.60px;font-size:16.23px;line-height:24.86px;-webkit-text-stroke:0.2px currentColor"><span style="color:#2f7ab8">for</span><span style="color:#2a2a2a"> </span><span style="color:#2a2a2a">xi</span><span style="color:#2a2a2a">,</span><span style="color:#2a2a2a"> </span><span style="color:#2a2a2a">p</span><span style="color:#2a2a2a"> </span><span style="color:#2f7ab8">in</span><span style="color:#2a2a2a"> </span><span style="color:#72592a">zip</span><span style="color:#2a47c4">(</span><span style="color:#2a2a2a">x</span><span style="color:#2a2a2a">,</span><span style="color:#2a2a2a"> </span><span style="color:#2a2a2a">type_stats</span><span style="color:#319331">[</span><span style="color:#a33d1d">'avg_price'</span><span style="color:#319331">]</span><span style="color:#2a47c4">)</span><span style="color:#2a2a2a">:</span><i style="display:inline-block;width:0;height:0"></i></div>
<div id="tx40" class="t m" style="left:431.00px;top:868.46px;font-size:16.23px;line-height:24.86px;-webkit-text-stroke:0.2px currentColor"><span style="color:#2a2a2a"> </span><span style="color:#2a2a2a"> </span><span style="color:#2a2a2a"> </span><span style="color:#2a2a2a"> </span><span style="color:#2a2a2a">ax2</span><span style="color:#2a2a2a">.</span><span style="color:#72592a">annotate</span><span style="color:#2a47c4">(</span><span style="color:#2f7ab8">f</span><span style="color:#a33d1d">'$</span><span style="color:#319331">{</span><span style="color:#2a2a2a">p</span><span style="color:#2f7ab8">:,.0f</span><span style="color:#319331">}</span><span style="color:#a33d1d">'</span><span style="color:#2a2a2a">,</span><span style="color:#2a2a2a"> </span><span style="color:#319331">(</span><span style="color:#2a2a2a">xi</span><span style="color:#2a2a2a">,</span><span style="color:#2a2a2a"> </span><span style="color:#2a2a2a">p</span><span style="color:#319331">)</span><span style="color:#2a2a2a">,</span><span style="color:#2a2a2a"> </span><span style="color:#12216f">textcoords</span><span style="color:#6e7a6e">=</span><span style="color:#a33d1d">'offset points'</span><span style="color:#2a2a2a">,</span><span style="color:#2a2a2a"> </span><span style="color:#12216f">xytext</span><span style="color:#6e7a6e">=</span><span style="color:#319331">(</span><span style="color:#15804c">0</span><span style="color:#2a2a2a">,</span><span style="color:#2a2a2a"> </span><span style="color:#15804c">10</span><span style="color:#319331">)</span><span style="color:#2a2a2a">,</span><i style="display:inline-block;width:0;height:0"></i></div>
<div id="tx41" class="t m" style="left:431.00px;top:893.33px;font-size:16.23px;line-height:24.86px;-webkit-text-stroke:0.2px currentColor"><span style="color:#2a2a2a"> </span><span style="color:#2a2a2a"> </span><span style="color:#2a2a2a"> </span><span style="color:#2a2a2a"> </span><span style="color:#2a2a2a"> </span><span style="color:#2a2a2a"> </span><span style="color:#2a2a2a"> </span><span style="color:#2a2a2a"> </span><span style="color:#2a2a2a"> </span><span style="color:#2a2a2a"> </span><span style="color:#2a2a2a"> </span><span style="color:#2a2a2a"> </span><span style="color:#2a2a2a"> </span><span style="color:#2a2a2a"> </span><span style="color:#2a2a2a"> </span><span style="color:#2a2a2a"> </span><span style="color:#2a2a2a"> </span><span style="color:#12216f">ha</span><span style="color:#6e7a6e">=</span><span style="color:#a33d1d">'center'</span><span style="color:#2a2a2a">,</span><span style="color:#2a2a2a"> </span><span style="color:#12216f">fontsize</span><span style="color:#6e7a6e">=</span><span style="color:#15804c">9</span><span style="color:#2a2a2a">,</span><span style="color:#2a2a2a"> </span><span style="color:#12216f">fontweight</span><span style="color:#6e7a6e">=</span><span style="color:#a33d1d">'bold'</span><span style="color:#2a2a2a">,</span><span style="color:#2a2a2a"> </span><span style="color:#12216f">color</span><span style="color:#6e7a6e">=</span><span style="color:#2a2a2a">NEGATIVE</span><span style="color:#2a47c4">)</span><i style="display:inline-block;width:0;height:0"></i></div>
<div id="tx42" class="t m" style="left:431.00px;top:918.19px;font-size:16.23px;line-height:24.86px;-webkit-text-stroke:0.2px currentColor"><span style="color:#2a2a2a">ax2</span><span style="color:#2a2a2a">.</span><span style="color:#72592a">set_ylabel</span><span style="color:#2a47c4">(</span><span style="color:#a33d1d">'Average Base Price ($)'</span><span style="color:#2a2a2a">,</span><span style="color:#2a2a2a"> </span><span style="color:#12216f">color</span><span style="color:#6e7a6e">=</span><span style="color:#2a2a2a">NEGATIVE</span><span style="color:#2a2a2a">,</span><span style="color:#2a2a2a"> </span><span style="color:#12216f">fontweight</span><span style="color:#6e7a6e">=</span><span style="color:#a33d1d">'bold'</span><span style="color:#2a47c4">)</span><i style="display:inline-block;width:0;height:0"></i></div>
<div id="tx43" class="t m" style="left:431.00px;top:943.04px;font-size:16.23px;line-height:24.86px;-webkit-text-stroke:0.2px currentColor"><span style="color:#2a2a2a">ax2</span><span style="color:#2a2a2a">.</span><span style="color:#72592a">tick_params</span><span style="color:#2a47c4">(</span><span style="color:#12216f">axis</span><span style="color:#6e7a6e">=</span><span style="color:#a33d1d">'y'</span><span style="color:#2a2a2a">,</span><span style="color:#2a2a2a"> </span><span style="color:#12216f">labelcolor</span><span style="color:#6e7a6e">=</span><span style="color:#2a2a2a">NEGATIVE</span><span style="color:#2a47c4">)</span><i style="display:inline-block;width:0;height:0"></i></div>
<div id="tx44" class="t m" style="left:431.00px;top:967.90px;font-size:16.23px;line-height:24.86px;-webkit-text-stroke:0.2px currentColor"><i style="display:inline-block;width:0;height:0"></i></div>
<div id="tx45" class="t m" style="left:431.00px;top:992.77px;font-size:16.23px;line-height:24.86px;-webkit-text-stroke:0.2px currentColor"><span style="color:#2a2a2a">ax1</span><span style="color:#2a2a2a">.</span><span style="color:#72592a">set_title</span><span style="color:#2a47c4">(</span><span style="color:#a33d1d">'Property Type Distribution &amp; Average Pricing'</span><span style="color:#2a2a2a">,</span><span style="color:#2a2a2a"> </span><span style="color:#12216f">fontsize</span><span style="color:#6e7a6e">=</span><span style="color:#15804c">14</span><span style="color:#2a2a2a">,</span><span style="color:#2a2a2a"> </span><span style="color:#12216f">fontweight</span><span style="color:#6e7a6e">=</span><span style="color:#a33d1d">'bold'</span><span style="color:#2a2a2a">,</span><span style="color:#2a2a2a"> </span><i style="display:inline-block;width:0;height:0"></i></div>
<div id="tx46" class="t m" style="left:431.00px;top:1017.63px;font-size:16.23px;line-height:24.86px;-webkit-text-stroke:0.2px currentColor"><span style="color:#12216f">color</span><span style="color:#6e7a6e">=</span><span style="color:#2a2a2a">ACCENT</span><span style="color:#2a2a2a">,</span><span style="color:#2a2a2a"> </span><span style="color:#12216f">pad</span><span style="color:#6e7a6e">=</span><span style="color:#15804c">15</span><span style="color:#2a47c4">)</span><i style="display:inline-block;width:0;height:0"></i></div>
<div id="tx47" class="t m" style="left:431.00px;top:1042.48px;font-size:16.23px;line-height:24.86px;-webkit-text-stroke:0.2px currentColor"><span style="color:#2a2a2a">ax1</span><span style="color:#2a2a2a">.</span><span style="color:#2a2a2a">spines</span><span style="color:#2a47c4">[</span><span style="color:#a33d1d">'top'</span><span style="color:#2a47c4">]</span><span style="color:#2a2a2a">.</span><span style="color:#72592a">set_visible</span><span style="color:#2a47c4">(</span><span style="color:#2f7ab8">False</span><span style="color:#2a47c4">)</span><i style="display:inline-block;width:0;height:0"></i></div>
<div id="tx48" class="t" style="left:1469.70px;top:74.32px;font-size:16.1px;color:#1a1a1a;font-weight:700;">Genie Code<i style="display:inline-block;width:0;height:0"></i></div>
<div class="a" style="left:1982px;top:77.8px;width:9.3px;height:9.3px;border-radius:50%;background:#3bab58"></div>
<svg style="left:2007px;top:73px;" width="20" height="20" viewBox="0 0 20 20"><path d="M9 1 V18 M0.5 9.5 H17.5" stroke="#5f5f5f" stroke-width="1.7"/></svg>
<svg style="left:2036.3px;top:72.2px;" width="20" height="20" viewBox="0 0 20 20"><path d="M19.13 8.23 L19.13 11.77 L16.66 11.36 L15.67 13.75 L17.71 15.20 L15.20 17.71 L13.75 15.67 L11.36 16.66 L11.77 19.13 L8.23 19.13 L8.64 16.66 L6.25 15.67 L4.80 17.71 L2.29 15.20 L4.33 13.75 L3.34 11.36 L0.87 11.77 L0.87 8.23 L3.34 8.64 L4.33 6.25 L2.29 4.80 L4.80 2.29 L6.25 4.33 L8.64 3.34 L8.23 0.87 L11.77 0.87 L11.36 3.34 L13.75 4.33 L15.20 2.29 L17.71 4.80 L15.67 6.25 L16.66 8.64 Z" fill="none" stroke="#5f5f5f" stroke-width="1.6" stroke-linejoin="round"/><circle cx="10" cy="10" r="3" fill="none" stroke="#5f5f5f" stroke-width="1.6"/></svg>
<svg style="left:2070px;top:72px;" width="12" height="20" viewBox="0 0 12 20"><circle cx="6" cy="3.8" r="1.8" fill="#5f5f5f"/><circle cx="6" cy="10.4" r="1.8" fill="#5f5f5f"/><circle cx="6" cy="17" r="1.8" fill="#5f5f5f"/></svg>
<svg style="left:2098.5px;top:75px;" width="16" height="16" viewBox="0 0 16 16"><path d="M0 0 L14.5 14.5 M14.5 0 L0 14.5" stroke="#5f5f5f" stroke-width="1.7"/></svg>
<div class="a" style="left:1469px;top:107px;width:651px;height:35.5px;background:#f7f7f7;border-radius:10px"></div>
<svg style="left:1484px;top:119px;" width="10" height="12" viewBox="0 0 10 12"><path d="M1.5 1 L6.5 6 L1.5 11" fill="none" stroke="#5f5f5f" stroke-width="1.7"/></svg>
<div id="tx49" class="t" style="left:1504.60px;top:117.40px;font-size:16px;color:#1a1a1a;font-weight:700;">Agent plan<i style="display:inline-block;width:0;height:0"></i></div>
<div id="tx50" class="t" style="left:1598.70px;top:117.41px;font-size:15.75px;color:#6b6b6b;font-weight:400;;-webkit-text-stroke:0.18px currentColor">Insight 1: Property type mix<i style="display:inline-block;width:0;height:0"></i></div>
<div id="tx51" class="t" style="right:327.70px;top:117.41px;font-size:15.9px;color:#6b6b6b;font-weight:400;;-webkit-text-stroke:0.18px currentColor">(0 of 4)<i style="display:inline-block;width:0;height:0"></i></div>
<div class="a" style="left:1484px;top:152px;width:622px;height:547px;border:1px solid #ebebeb;border-radius:6px;background:#fff"></div>
<div class="a" style="left:1485px;top:153px;width:620px;height:142px;background:#f7f7f7;border-radius:5px 5px 0 0"></div>
<div class="a" style="left:1485px;top:202px;width:620px;height:1px;background:#e4e4e4;box-shadow:0 1px 2px rgba(0,0,0,0.06)"></div>
<svg style="left:1506px;top:172px;" width="12" height="12" viewBox="0 0 12 12"><path d="M0.5 0.5 L10.5 6 L0.5 11.5 Z" fill="#6b6b6b"/></svg>
<svg style="left:1536px;top:171px;" width="16" height="14" viewBox="0 0 16 14"><path d="M0 6.6000000000000005 L5.3999999999999995 12 L15 0" fill="none" stroke="#2f8a3e" stroke-width="2.0"/></svg>
<div id="tx52" class="t" style="left:1562.00px;top:172.00px;font-size:13.1px;color:#1f1f1f;font-weight:400;;-webkit-text-stroke:0.18px currentColor">Just now (1s)<i style="display:inline-block;width:0;height:0"></i></div>
<div class="a" style="left:1485px;top:203px;width:620px;height:92px;overflow:hidden">
<div id="tx53" class="t m" style="left:45.60px;top:-16.15px;font-size:16.23px;line-height:24.86px;-webkit-text-stroke:0.2px currentColor"><span style="color:#2f7ab8">SELECT</span><span style="color:#2a2a2a"> property_type, </span><span style="color:#795e26">COUNT</span><span style="color:#2a47c4">(</span><span style="color:#2a2a2a">*</span><span style="color:#2a47c4">)</span><span style="color:#2f7ab8"> as </span><span style="color:#2a2a2a">cnt, </span><span style="color:#795e26">ROUND</span><span style="color:#2a47c4">(</span><span style="color:#795e26">AVG</span><i style="display:inline-block;width:0;height:0"></i></div>
<div id="tx54" class="t m" style="left:45.60px;top:8.71px;font-size:16.23px;line-height:24.86px;-webkit-text-stroke:0.2px currentColor"><span style="color:#319331">(</span><span style="color:#2a2a2a">base_price</span><span style="color:#319331">)</span><span style="color:#2a2a2a">, </span><span style="color:#15804c">2</span><span style="color:#2a47c4">)</span><span style="color:#2f7ab8"> as </span><span style="color:#2a2a2a">avg_price, </span><span style="color:#795e26">ROUND</span><span style="color:#2a47c4">(</span><span style="color:#795e26">AVG</span><span style="color:#319331">(</span><span style="color:#2a2a2a">bedrooms</span><span style="color:#319331">)</span><span style="color:#2a2a2a">, </span><span style="color:#15804c">1</span><span style="color:#2a47c4">)</span><i style="display:inline-block;width:0;height:0"></i></div>
<div id="tx55" class="t m" style="left:45.60px;top:33.58px;font-size:16.23px;line-height:24.86px;-webkit-text-stroke:0.2px currentColor"><span style="color:#2f7ab8">as</span><span style="color:#2a2a2a"> avg_bedrooms </span><span style="color:#2f7ab8">FROM</span><span style="color:#2a2a2a"> </span><span style="color:#c4982f">samples</span><span style="color:#2a2a2a">.</span><span style="color:#c4982f">wanderbricks</span><span style="color:#2a2a2a">.</span><span style="color:#2f7ab8">properties</span><i style="display:inline-block;width:0;height:0"></i></div>
<div id="tx56" class="t m" style="left:45.60px;top:58.44px;font-size:16.23px;line-height:24.86px;-webkit-text-stroke:0.2px currentColor"><span style="color:#2f7ab8">GROUP BY</span><span style="color:#2a2a2a"> property_type </span><span style="color:#2f7ab8">ORDER BY</span><span style="color:#2a2a2a"> cnt </span><span style="color:#2f7ab8">DESC LIMIT</span><span style="color:#2a2a2a"> </span><span style="color:#15804c">20</span><i style="display:inline-block;width:0;height:0"></i></div>
</div>
<div id="tx57" class="t" style="left:1529.00px;top:321.00px;font-size:16px;color:#1a1a1a;font-weight:700;">Table<i style="display:inline-block;width:0;height:0"></i></div>
<svg style="left:1585px;top:324px;" width="12" height="10" viewBox="0 0 12 10"><path d="M1 1.5 L4.5 5.5 L8 1.5" fill="none" stroke="#3d6499" stroke-width="1.6"/></svg>
<div class="a" style="left:1505px;top:354.5px;width:119px;height:4px;background:#2272b4"></div>
<svg style="left:1651px;top:320px;" width="16" height="16" viewBox="0 0 16 16"><path d="M7 1 V13.5 M0.7 7.2 H13.3" stroke="#333" stroke-width="1.6"/></svg>
<svg style="left:1955px;top:317px;" width="24" height="24" viewBox="0 0 24 24"><circle cx="10.5" cy="10.2" r="8.2" fill="none" stroke="#5f5f5f" stroke-width="1.7"/><line x1="16.3" y1="16" x2="19.5" y2="19.3" stroke="#5f5f5f" stroke-width="1.9"/></svg>
<svg style="left:1991px;top:318px;" width="20" height="20" viewBox="0 0 20 20"><path d="M1.3 1.3 H17.7 V3.8 L11.5 10 V17.5 H7.5 V10 L1.3 3.8 Z" fill="none" stroke="#5f5f5f" stroke-width="1.6" stroke-linejoin="round"/></svg>
<svg style="left:2031px;top:317px;" width="10" height="20" viewBox="0 0 10 20"><g fill="none" stroke="#5f5f5f" stroke-width="1.5"><rect x="1" y="1" width="6.4" height="17.6"/><line x1="1" y1="6.8" x2="7.4" y2="6.8"/><line x1="1" y1="12.6" x2="7.4" y2="12.6"/></g></svg>
<svg style="left:2061px;top:318px;" width="20" height="20" viewBox="0 0 20 20"><g fill="none" stroke="#5f5f5f" stroke-width="1.7"><rect x="1" y="1" width="16" height="16.5"/><line x1="4.6" y1="1" x2="4.6" y2="17.5"/></g></svg>
<div class="a" style="left:1486px;top:360px;width:619px;height:1px;background:#ebebeb"></div>
<div class="a" style="left:1486px;top:398px;width:619px;height:1px;background:#ededed"></div>
<div class="a" style="left:1486px;top:429px;width:619px;height:1px;background:#ededed"></div>
<div class="a" style="left:1486px;top:460px;width:619px;height:1px;background:#ededed"></div>
<div class="a" style="left:1486px;top:491px;width:619px;height:1px;background:#ededed"></div>
<div class="a" style="left:1486px;top:522px;width:619px;height:1px;background:#ededed"></div>
<div class="a" style="left:1550.5px;top:361px;width:1px;height:161px;background:#ededed"></div>
<div class="a" style="left:1744px;top:361px;width:1px;height:161px;background:#ededed"></div>
<div class="a" style="left:1856px;top:361px;width:1px;height:161px;background:#ededed"></div>
<div class="a" style="left:2016.5px;top:361px;width:1px;height:161px;background:#ededed"></div>
<div class="t" style="left:1561px;top:374px;font-size:10px;color:#6b6b6b">A</div>
<div class="t" style="left:1568.5px;top:369px;font-size:10px;color:#6b6b6b">B</div>
<div class="t" style="left:1575.5px;top:378px;font-size:10px;color:#6b6b6b">C</div>
<div id="tx58" class="t" style="left:1586.60px;top:372.90px;font-size:15.45px;color:#1a1a1a;font-weight:700;">property_type<i style="display:inline-block;width:0;height:0"></i></div>
<div class="t" style="left:1756px;top:375px;font-size:9.5px;color:#6b6b6b">1</div>
<div class="t" style="left:1762px;top:369px;font-size:10.5px;color:#6b6b6b">2</div>
<div class="t" style="left:1768px;top:378px;font-size:10.5px;color:#6b6b6b">3</div>
<div id="tx59" class="t" style="left:1779.70px;top:372.90px;font-size:15.45px;color:#1a1a1a;font-weight:700;">cnt<i style="display:inline-block;width:0;height:0"></i></div>
<div id="tx60" class="t" style="left:1866.00px;top:372.90px;font-size:15.5px;color:#6b6b6b;font-weight:400;;-webkit-text-stroke:0.18px currentColor">1.2<i style="display:inline-block;width:0;height:0"></i></div>
<div id="tx61" class="t" style="left:1892.20px;top:372.91px;font-size:15.4px;color:#1a1a1a;font-weight:700;">avg_price<i style="display:inline-block;width:0;height:0"></i></div>
<div id="tx62" class="t" style="left:2026.00px;top:372.90px;font-size:15.5px;color:#6b6b6b;font-weight:400;;-webkit-text-stroke:0.18px currentColor">1.2<i style="display:inline-block;width:0;height:0"></i></div>
<div class="a" style="left:2046px;top:365px;width:59px;height:30px;overflow:hidden">
<div id="tx63" class="t" style="left:6.40px;top:7.91px;font-size:15.4px;color:#1a1a1a;font-weight:700;">avg_bedrooms<i style="display:inline-block;width:0;height:0"></i></div>
</div>
<div id="tx64" class="t" style="left:1017.40px;width:1000px;text-align:center;top:406.00px;font-size:16px;color:#6b6b6b;font-weight:400;;-webkit-text-stroke:0.18px currentColor">1<i style="display:inline-block;width:0;height:0"></i></div>
<div id="tx65" class="t" style="left:1561.30px;top:406.00px;font-size:16px;color:#1a1a1a;font-weight:400;;-webkit-text-stroke:0.18px currentColor">Urban Year-Round<i style="display:inline-block;width:0;height:0"></i></div>
<div id="tx66" class="t" style="right:592.00px;top:405.01px;font-size:16.1px;color:#1a1a1a;font-weight:400;;-webkit-text-stroke:0.18px currentColor">9264<i style="display:inline-block;width:0;height:0"></i></div>
<div id="tx67" class="t" style="right:431.40px;top:405.01px;font-size:16.1px;color:#1a1a1a;font-weight:400;;-webkit-text-stroke:0.18px currentColor">173.04<i style="display:inline-block;width:0;height:0"></i></div>
<div id="tx68" class="t" style="left:1017.40px;width:1000px;text-align:center;top:437.00px;font-size:16px;color:#6b6b6b;font-weight:400;;-webkit-text-stroke:0.18px currentColor">2<i style="display:inline-block;width:0;height:0"></i></div>
<div id="tx69" class="t" style="left:1561.30px;top:437.00px;font-size:16px;color:#1a1a1a;font-weight:400;;-webkit-text-stroke:0.18px currentColor">Summer Getaway<i style="display:inline-block;width:0;height:0"></i></div>
<div id="tx70" class="t" style="right:592.00px;top:436.01px;font-size:16.1px;color:#1a1a1a;font-weight:400;;-webkit-text-stroke:0.18px currentColor">7068<i style="display:inline-block;width:0;height:0"></i></div>
<div id="tx71" class="t" style="right:431.40px;top:436.01px;font-size:16.1px;color:#1a1a1a;font-weight:400;;-webkit-text-stroke:0.18px currentColor">198.54<i style="display:inline-block;width:0;height:0"></i></div>
<div id="tx72" class="t" style="left:1017.40px;width:1000px;text-align:center;top:468.00px;font-size:16px;color:#6b6b6b;font-weight:400;;-webkit-text-stroke:0.18px currentColor">3<i style="display:inline-block;width:0;height:0"></i></div>
<div id="tx73" class="t" style="left:1561.30px;top:468.00px;font-size:16px;color:#1a1a1a;font-weight:400;;-webkit-text-stroke:0.18px currentColor">Historical Place<i style="display:inline-block;width:0;height:0"></i></div>
<div id="tx74" class="t" style="right:592.00px;top:467.01px;font-size:16.1px;color:#1a1a1a;font-weight:400;;-webkit-text-stroke:0.18px currentColor">1646<i style="display:inline-block;width:0;height:0"></i></div>
<div id="tx75" class="t" style="right:431.40px;top:467.01px;font-size:16.1px;color:#1a1a1a;font-weight:400;;-webkit-text-stroke:0.18px currentColor">147.46<i style="display:inline-block;width:0;height:0"></i></div>
<div id="tx76" class="t" style="left:1017.40px;width:1000px;text-align:center;top:499.00px;font-size:16px;color:#6b6b6b;font-weight:400;;-webkit-text-stroke:0.18px currentColor">4<i style="display:inline-block;width:0;height:0"></i></div>
<div id="tx77" class="t" style="left:1561.30px;top:499.00px;font-size:16px;color:#1a1a1a;font-weight:400;;-webkit-text-stroke:0.18px currentColor">Ski Resort<i style="display:inline-block;width:0;height:0"></i></div>
<div id="tx78" class="t" style="right:592.00px;top:498.01px;font-size:16.1px;color:#1a1a1a;font-weight:400;;-webkit-text-stroke:0.18px currentColor">185<i style="display:inline-block;width:0;height:0"></i></div>
<div id="tx79" class="t" style="right:431.40px;top:498.01px;font-size:16.1px;color:#1a1a1a;font-weight:400;;-webkit-text-stroke:0.18px currentColor">266.49<i style="display:inline-block;width:0;height:0"></i></div>
<div class="a" style="left:1757.4px;top:559px;width:75px;height:5px;background:#e3e5e5;border-radius:3px"></div>
<div class="a" style="left:1495.6px;top:572.7px;width:89.5px;height:39px;border:1.3px solid #d6d6d6;border-radius:6px"></div>
<div class="a" style="left:1546px;top:573px;width:1.3px;height:38px;background:#d6d6d6"></div>
<svg style="left:1511px;top:581px;" width="20" height="22" viewBox="0 0 20 22"><g fill="none" stroke="#5f5f5f" stroke-width="1.8"><line x1="9.5" y1="1" x2="9.5" y2="12.5"/><path d="M4.5 7.5 L9.5 12.5 L14.5 7.5"/><line x1="1.5" y1="18" x2="17.5" y2="18"/></g></svg>
<svg style="left:1560px;top:587px;" width="12" height="10" viewBox="0 0 12 10"><path d="M1 1.5 L5.0 6.0 L9 1.5" fill="none" stroke="#5f5f5f" stroke-width="1.6"/></svg>
<div id="tx80" class="t" style="left:1595.70px;top:585.60px;font-size:16.9px;color:#1a1a1a;font-weight:400;;-webkit-text-stroke:0.18px currentColor">4 rows  |  1.36s runtime<i style="display:inline-block;width:0;height:0"></i></div>
<div class="a" style="left:1495.6px;top:627.7px;width:598px;height:61px;background:#f7f7f7;border-radius:7px"></div>
<div class="a" style="left:1501.4px;top:648.3px;width:19.7px;height:19.7px;border-radius:50%;background:#6b6b6b"></div>
<div class="t" style="left:1501.4px;width:19.7px;text-align:center;top:651px;font-size:13px;color:#fff;font-weight:700">i</div>
<div id="tx81" class="t" style="left:1530.00px;top:638.22px;font-size:16.9px;color:#1a1a1a;font-weight:400;;-webkit-text-stroke:0.18px currentColor">This result is stored as<i style="display:inline-block;width:0;height:0"></i></div>
<div class="a" style="left:1704.5px;top:635px;width:66.5px;height:22.5px;background:#ebebeb;border-radius:4px"></div>
<div id="tx82" class="t m" style="left:1708.00px;top:639.22px;font-size:16.4px;color:#1a1a1a;font-weight:400;;-webkit-text-stroke:0.18px currentColor">_sqldf<i style="display:inline-block;width:0;height:0"></i></div>
<div id="tx83" class="t" style="left:1776.70px;top:638.21px;font-size:16.85px;color:#1a1a1a;font-weight:400;;-webkit-text-stroke:0.18px currentColor">and can be used in other<i style="display:inline-block;width:0;height:0"></i></div>
<div id="tx84" class="t" style="left:1967.30px;top:638.22px;font-size:16.9px;color:#2a75b8;font-weight:400;;-webkit-text-stroke:0.18px currentColor">Python<i style="display:inline-block;width:0;height:0"></i></div>
<div id="tx85" class="t" style="left:2025.00px;top:638.22px;font-size:16.9px;color:#1a1a1a;font-weight:400;;-webkit-text-stroke:0.18px currentColor">and<i style="display:inline-block;width:0;height:0"></i></div>
<div id="tx86" class="t" style="left:2056.50px;top:638.22px;font-size:16.9px;color:#2a75b8;font-weight:400;;-webkit-text-stroke:0.18px currentColor">SQL<i style="display:inline-block;width:0;height:0"></i></div>
<div id="tx87" class="t" style="left:1530.00px;top:663.61px;font-size:16.9px;color:#1a1a1a;font-weight:400;;-webkit-text-stroke:0.18px currentColor">cells.<i style="display:inline-block;width:0;height:0"></i></div>
<div id="tx88" class="t" style="left:1485.00px;top:716.80px;font-size:15.8px;color:#6b6b6b;font-weight:400;;-webkit-text-stroke:0.18px currentColor">Thoughts: Now I have a good understanding of the data. Let me plan 4 insights:<i style="display:inline-block;width:0;height:0"></i></div>
<div id="tx89" class="t" style="left:1485.00px;top:749.51px;font-size:15.8px;color:#6b6b6b;font-weight:400;;-webkit-text-stroke:0.18px currentColor">Edited<i style="display:inline-block;width:0;height:0"></i></div>
<div class="a" style="left:1533.7px;top:745.5px;width:237px;height:21.5px;border:1.2px solid #dcdcdc;border-radius:5px;background:#fff"></div>
<svg style="left:1537px;top:749px;" width="16" height="16" viewBox="0 0 16 16"><g transform="scale(0.85)"><g fill="none" stroke="#6b6b6b" stroke-width="1.8"><rect x="4.5" y="1" width="13.5" height="16" rx="0.8"/><line x1="8.3" y1="1" x2="8.3" y2="17"/><line x1="1.5" y1="4.5" x2="4.5" y2="4.5"/><line x1="1.5" y1="9" x2="4.5" y2="9"/><line x1="1.5" y1="13.5" x2="4.5" y2="13.5"/></g></g></svg>
<div id="tx90" class="t" style="left:1558.50px;top:748.51px;font-size:16.25px;color:#6b6b6b;font-weight:400;;-webkit-text-stroke:0.18px currentColor">New Notebook 2026-03-04...<i style="display:inline-block;width:0;height:0"></i></div>
<div id="tx91" class="t" style="left:1775.00px;top:749.51px;font-size:15.8px;color:#6b6b6b;font-weight:400;;-webkit-text-stroke:0.18px currentColor">, updated 1 cell<i style="display:inline-block;width:0;height:0"></i></div>
<div id="tx92" class="t" style="left:1485.00px;top:783.01px;font-size:15.8px;color:#6b6b6b;font-weight:400;;-webkit-text-stroke:0.18px currentColor">Editing<i style="display:inline-block;width:0;height:0"></i></div>
<svg style="left:2086px;top:790px;" width="16" height="10" viewBox="0 0 16 10"><path d="M1.5 1.5 Q7.5 7.5 13.5 3.5" fill="none" stroke="#9a9a9a" stroke-width="1.4"/></svg>
<div class="a" style="left:1465.4px;top:842px;width:656.6px;height:110px;background:#f7f7f7;border-radius:10px 10px 0 0"></div>
<svg style="left:1480.5px;top:858.5px;" width="12" height="10" viewBox="0 0 12 10"><path d="M1 1.5 L5.0 6.0 L9 1.5" fill="none" stroke="#333" stroke-width="1.7"/></svg>
<div id="tx93" class="t" style="left:1500.00px;top:854.32px;font-size:15.6px;color:#1a1a1a;font-weight:700;">1 asset<i style="display:inline-block;width:0;height:0"></i></div>
<svg style="left:1476px;top:887.5px;" width="20" height="20" viewBox="0 0 20 20"><g fill="none" stroke="#333" stroke-width="1.8"><rect x="4.5" y="1" width="13.5" height="16" rx="0.8"/><line x1="8.3" y1="1" x2="8.3" y2="17"/><line x1="1.5" y1="4.5" x2="4.5" y2="4.5"/><line x1="1.5" y1="9" x2="4.5" y2="9"/><line x1="1.5" y1="13.5" x2="4.5" y2="13.5"/></g></svg>
<div id="tx94" class="t" style="left:1500.60px;top:889.00px;font-size:16.2px;color:#1a1a1a;font-weight:400;;-webkit-text-stroke:0.18px currentColor">New Notebook 2026-03-04 22:21:55<i style="display:inline-block;width:0;height:0"></i></div>
<div id="tx95" class="t" style="left:1773.00px;top:890.00px;font-size:15.3px;color:#2e8b3e;font-weight:400;;-webkit-text-stroke:0.18px currentColor">+44<i style="display:inline-block;width:0;height:0"></i></div>
<svg style="left:1813.5px;top:893px;" width="12" height="10" viewBox="0 0 12 10"><path d="M1 1.5 L5.0 6.0 L9 1.5" fill="none" stroke="#333" stroke-width="1.6"/></svg>
<div id="tx96" class="t" style="left:1505.00px;top:922.00px;font-size:15.9px;color:#1a1a1a;font-weight:400;;-webkit-text-stroke:0.18px currentColor">Insight 1 – Property Type Mix &amp; Avg Pricing<i style="display:inline-block;width:0;height:0"></i></div>
<div id="tx97" class="t" style="left:1817.30px;top:922.00px;font-size:15.3px;color:#2e8b3e;font-weight:400;;-webkit-text-stroke:0.18px currentColor">+44<i style="display:inline-block;width:0;height:0"></i></div>
<svg style="left:2067.5px;top:889.5px;" width="16" height="16" viewBox="0 0 16 16"><path d="M0 0 L14.5 14.5 M14.5 0 L0 14.5" stroke="#5f5f5f" stroke-width="1.7"/></svg>
<svg style="left:2095.5px;top:890.0px;" width="18" height="14" viewBox="0 0 18 14"><path d="M0 7.15 L6.3 13 L17.5 0" fill="none" stroke="#5f5f5f" stroke-width="1.7"/></svg>
<svg style="left:2067.5px;top:921.5px;" width="16" height="16" viewBox="0 0 16 16"><path d="M0 0 L14.5 14.5 M14.5 0 L0 14.5" stroke="#5f5f5f" stroke-width="1.7"/></svg>
<svg style="left:2095.5px;top:922.0px;" width="18" height="14" viewBox="0 0 18 14"><path d="M0 7.15 L6.3 13 L17.5 0" fill="none" stroke="#5f5f5f" stroke-width="1.7"/></svg>
<div class="a" style="left:1470px;top:949.5px;width:650.5px;height:85px;background:#fff;border:1.3px solid #d8d8d8;border-radius:9px;box-shadow:0 1px 3px rgba(0,0,0,0.06)"></div>
<div id="tx98" class="t" style="left:1480.30px;top:965.01px;font-size:16.8px;color:#808080;font-weight:400;;-webkit-text-stroke:0.18px currentColor">Send follow-up messages to guide Genie Code<i style="display:inline-block;width:0;height:0"></i></div>
<svg style="left:1486px;top:1001px;" width="18" height="18" viewBox="0 0 18 18"><g fill="none" stroke="#5f5f5f" stroke-width="1.5"><rect x="1" y="1" width="15.5" height="15.5"/><circle cx="6" cy="6" r="1.8"/><path d="M1 16 L10.5 7.5 L16.5 13"/></g></svg>
<div class="t" style="left:1519px;top:998.5px;font-size:21px;color:#5f5f5f">@</div>
<div class="a" style="left:1985.5px;top:994.3px;width:84.5px;height:29px;background:#f6f6f6;border-radius:6px"></div>
<div id="tx99" class="t" style="left:1995.50px;top:1001.50px;font-size:16.4px;color:#5f5f5f;font-weight:400;;-webkit-text-stroke:0.18px currentColor">Agent<i style="display:inline-block;width:0;height:0"></i></div>
<svg style="left:2049px;top:1006.5px;" width="12" height="10" viewBox="0 0 12 10"><path d="M1 1.5 L5.0 6.0 L9 1.5" fill="none" stroke="#5f5f5f" stroke-width="1.7"/></svg>
<div class="a" style="left:2090px;top:1004.3px;width:10.5px;height:10px;background:#d42e52;border-radius:1px"></div>
<div id="tx100" class="t" style="left:1649.30px;top:1043.50px;font-size:15.7px;color:#6b6b6b;font-weight:400;;-webkit-text-stroke:0.18px currentColor">Always review the accuracy of responses.<i style="display:inline-block;width:0;height:0"></i></div>
<div class="a" style="left:2130px;top:57px;width:1px;height:1008px;background:#ececec"></div>
<svg style="left:2150px;top:78px;" width="14" height="8" viewBox="0 0 14 8"><path d="M1.2 6.2 L6 1.5 L10.8 6.2" fill="none" stroke="#5f5f5f" stroke-width="1.7"/></svg>
<svg style="left:2145px;top:117px;" width="22" height="22" viewBox="0 0 22 22"><path d="M10.7 1.5 C16.3 1.5 20.2 4.6 20.2 8.6 C20.2 12.6 16.3 15.6 10.7 15.6 C9.8 15.6 9 15.5 8.3 15.4 L5.6 18.9 L5.6 14.6 C2.8 13.4 1.2 11.2 1.2 8.6 C1.2 4.6 5.1 1.5 10.7 1.5 Z" fill="none" stroke="#5f5f5f" stroke-width="1.6" stroke-linejoin="round"/><circle cx="7.2" cy="8.6" r="0.95" fill="#5f5f5f"/><circle cx="10.7" cy="8.6" r="0.95" fill="#5f5f5f"/><circle cx="14.2" cy="8.6" r="0.95" fill="#5f5f5f"/></svg>
<svg style="left:2146px;top:163px;" width="20" height="20" viewBox="0 0 20 20"><path d="M6.5 1 H13.5 M7.5 1 V10 L2.5 14.5 Q1 17.5 4 17.5 H16 Q19 17.5 17.5 14.5 L12.5 10 V1" fill="none" stroke="#5f5f5f" stroke-width="1.7" stroke-linejoin="round"/></svg>
<svg style="left:2145px;top:206px;" width="22" height="22" viewBox="0 0 22 22"><path d="M3.8 12.5 A8 8 0 1 0 5.5 5.5" fill="none" stroke="#5f5f5f" stroke-width="1.8"/><path d="M1.5 10 L3.8 13.5 L7 10.8" fill="none" stroke="#5f5f5f" stroke-width="1.7"/><path d="M11.5 6.5 V11.5 L14.5 14" fill="none" stroke="#5f5f5f" stroke-width="1.7"/></svg>
<div class="t" style="left:2145px;top:252px;font-size:17px;color:#5f5f5f;letter-spacing:-0.5px">{x}</div>
<svg style="left:2147px;top:296px;" width="18" height="20" viewBox="0 0 18 20"><g fill="none" stroke="#5f5f5f" stroke-width="1.7"><line x1="4" y1="1" x2="4" y2="10"/><circle cx="4" cy="13" r="2.6"/><line x1="4" y1="15.6" x2="4" y2="19"/><line x1="12.5" y1="1" x2="12.5" y2="3.8"/><circle cx="12.5" cy="6.5" r="2.6"/><line x1="12.5" y1="9.1" x2="12.5" y2="19"/></g></svg>
<svg style="left:2146px;top:340px;" width="22" height="22" viewBox="0 0 22 22"><circle cx="10.3" cy="10.4" r="9" fill="none" stroke="#5f5f5f" stroke-width="1.7"/><line x1="10.3" y1="8.8" x2="10.3" y2="15" stroke="#5f5f5f" stroke-width="1.9"/><circle cx="10.3" cy="5.9" r="1.1" fill="#5f5f5f"/></svg>
<div class="a" style="left:2136.6px;top:376.2px;width:39px;height:39px;background:#e4ecf4;border-radius:7px"></div>
<svg style="left:2136px;top:375.5px;" width="42" height="42" viewBox="0 0 42 42"><path d="M12 23.3 C10.2 20.3 13.6 17.6 15.3 20.3 C16.8 22.8 18.6 24.6 20.6 24.6 C23.2 24.6 25 22.2 26 20.6 C26.6 19.6 27.6 19.4 29.6 19.4" fill="none" stroke="#0e2a4a" stroke-width="2" stroke-linecap="round"/><line x1="20.2" y1="13.5" x2="20.2" y2="21" stroke="#0e2a4a" stroke-width="2.2"/><line x1="16.5" y1="17.2" x2="24" y2="17.2" stroke="#0e2a4a" stroke-width="2.2"/><line x1="17.4" y1="27.6" x2="23" y2="27.6" stroke="#0e2a4a" stroke-width="1.9"/></svg>
<div class="t" style="left:2145.5px;top:940px;font-size:20px;color:#5f5f5f">⌘</div>
<svg style="left:2146px;top:985px;" width="20" height="20" viewBox="0 0 20 20"><g fill="none" stroke="#5f5f5f" stroke-width="1.6"><rect x="1" y="1.5" width="16.5" height="15.5"/><path d="M4.5 6 L7.5 8.5 L4.5 11"/><line x1="9" y1="12" x2="13.5" y2="12"/></g></svg>
<svg style="left:2145px;top:1029px;" width="24" height="24" viewBox="0 0 24 24"><g fill="none" stroke="#5f5f5f" stroke-width="1.5"><path d="M7.3 2 Q4.6 2 4.6 4.6 V7.4 Q4.6 9 2.8 9 Q4.6 9 4.6 10.6 V13.4 Q4.6 16 7.3 16"/><path d="M12.7 2 Q15.4 2 15.4 4.6 V7.4 Q15.4 9 17.2 9"/></g><circle cx="16.3" cy="15.6" r="5.6" fill="#5f5f5f" stroke="#fff" stroke-width="1.3"/><path d="M13.8 15.6 L15.6 17.4 L18.8 13.8" fill="none" stroke="#fff" stroke-width="1.4"/></svg>
<div class="a" style="left:733px;top:1014.3px;width:324px;height:39.5px;background:#fff;border-radius:9px;box-shadow:0 2px 8px rgba(0,0,0,0.12)"></div>
<svg style="left:753px;top:1027px;" width="10" height="14" viewBox="0 0 10 14"><path d="M7.5 1.5 L2.5 7 L7.5 12.5" fill="none" stroke="#7a7a7a" stroke-width="1.5"/></svg>
<div id="tx101" class="t" style="left:778.90px;top:1027.50px;font-size:14.8px;color:#1a1a1a;font-weight:700;">1/1 asset<i style="display:inline-block;width:0;height:0"></i></div>
<svg style="left:857px;top:1027px;" width="10" height="14" viewBox="0 0 10 14"><path d="M2.5 1.5 L7.5 7 L2.5 12.5" fill="none" stroke="#7a7a7a" stroke-width="1.5"/></svg>
<div class="a" style="left:886.8px;top:1022px;width:1.2px;height:25px;background:#e3e3e3"></div>
<div class="a" style="left:898px;top:1019.4px;width:68.5px;height:29.5px;background:#fff;border:1.2px solid #d2d2d2;border-radius:6px"></div>
<div id="tx102" class="t" style="left:909.00px;top:1025.81px;font-size:16.4px;color:#1a1a1a;font-weight:400;;-webkit-text-stroke:0.18px currentColor">Reject<i style="display:inline-block;width:0;height:0"></i></div>
<div class="a" style="left:972px;top:1019.4px;width:74px;height:29.5px;background:#2272b4;border-radius:6px"></div>
<div id="tx103" class="t" style="left:983.00px;top:1025.81px;font-size:17.3px;color:#ffffff;font-weight:400;;-webkit-text-stroke:0.18px currentColor">Accept<i style="display:inline-block;width:0;height:0"></i></div>
<svg style="left:1447px;top:905.1px;" width="26" height="28" viewBox="0 0 26 28"><g transform="scale(0.78)"><path d="M8 3 Q8 1 10 1 Q12 1 12 3 V11 Q12 9.5 14 9.5 Q16 9.5 16 11.5 Q16 10.5 18 10.5 Q20 10.5 20 12.5 Q20 11.5 21.5 11.5 Q23.5 11.5 23.5 13.5 V19 Q23.5 24 19.5 26 H12.5 Q10 26 8.5 23.5 L3 16.5 Q2 15 3.5 14 Q5 13 6.5 14.5 L8 16 Z" fill="#fff" stroke="#222" stroke-width="1.3" stroke-linejoin="round"/><path d="M12.5 17 V22 M15.8 17 V22 M19 17 V22" stroke="#222" stroke-width="1.3"/></g></svg>
</body></html>
